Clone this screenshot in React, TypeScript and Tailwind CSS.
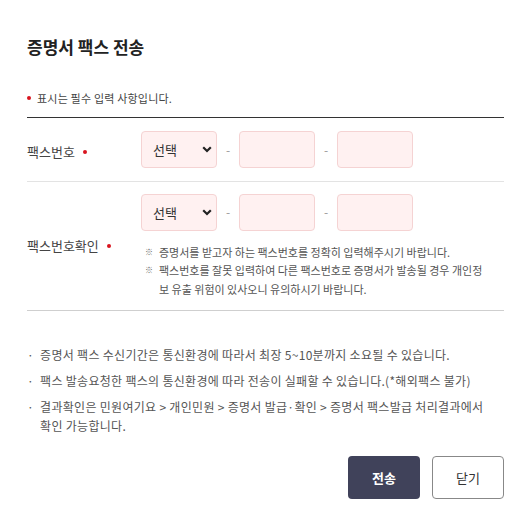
import React from "react";

const font = { fontFamily: '"Noto Sans CJK KR", "Noto Sans", sans-serif' };

function PhoneInputs() {
  return (
    <div className="flex items-center">
      <div className="relative w-[76px] h-[37px]">
        <select className="appearance-none w-full h-full rounded-[4px] border border-[#f5d3d3] bg-[#fff1f1] pl-[11px] text-[13px] text-[#333] outline-none">
          <option>선택</option>
        </select>
        <svg
          className="absolute right-[5px] top-[15px] pointer-events-none"
          width="10"
          height="7"
          viewBox="0 0 10 7"
        >
          <path d="M1.2 1.2 L5 5 L8.8 1.2" fill="none" stroke="#222" strokeWidth="2.2" />
        </svg>
      </div>
      <span className="w-[22px] text-center text-[12px] text-[#999]">-</span>
      <input className="w-[76px] h-[37px] rounded-[4px] border border-[#f5d3d3] bg-[#fff1f1] outline-none" />
      <span className="w-[22px] text-center text-[12px] text-[#999]">-</span>
      <input className="w-[76px] h-[37px] rounded-[4px] border border-[#f5d3d3] bg-[#fff1f1] outline-none" />
    </div>
  );
}

function Dot() {
  return <span className="inline-block w-[4px] h-[4px] rounded-full bg-[#d9141e] align-middle" />;
}

export default function App() {
  return (
    <div className="w-[513px] h-[529px] bg-white text-[#333] overflow-hidden" style={font}>
      <div className="pl-[27px] pr-[9px] pt-[34px]">
        <h2 className="text-[17px] font-bold text-[#222] leading-[26px]">증명서 팩스 전송</h2>

        <p className="mt-[30px] flex items-center gap-[6px] text-[11px] text-[#444] leading-[16px] mb-[11px] tracking-[0.2px]">
          <Dot />
          표시는 필수 입력 사항입니다.
        </p>

        <div className="border-t border-[#333]">
          <div className="flex items-center h-[64px] border-b border-[#e3e3e3]">
            <div className="w-[114px] flex items-center gap-[8px] pt-[4px] text-[13px] text-[#444]">
              팩스번호 <Dot />
            </div>
            <PhoneInputs />
          </div>

          <div className="flex items-center h-[129px] border-b border-[#cfcfcf]">
            <div className="w-[114px] flex items-center gap-[8px] text-[13px] text-[#444]">
              팩스번호확인 <Dot />
            </div>
            <div className="flex flex-col">
              <PhoneInputs />
              <ul className="mt-[12px] pl-[4px] text-[11px] leading-[18.5px] text-[#555]">
                <li className="flex gap-[6px]">
                  <span className="text-[8px] text-[#666]">※</span>
                  <span>증명서를 받고자 하는 팩스번호를 정확히 입력해주시기 바랍니다.</span>
                </li>
                <li className="flex gap-[6px]">
                  <span className="text-[8px] text-[#666]">※</span>
                  <span className="w-[326px] break-all">
                    팩스번호를 잘못 입력하여 다른 팩스번호로 증명서가 발송될 경우 개인정보 유출 위험이 있사오니 유의하시기 바랍니다.
                  </span>
                </li>
              </ul>
            </div>
          </div>
        </div>

        <ul className="mt-[34px] flex flex-col gap-[7px] text-[12px] leading-[19px] text-[#555] tracking-[0.3px]">
          <li className="flex gap-[6px]">
            <span className="text-[#555]">·</span>
            <span>증명서 팩스 수신기간은 통신환경에 따라서 최장 5~10분까지 소요될 수 있습니다.</span>
          </li>
          <li className="flex gap-[6px]">
            <span className="text-[#555]">·</span>
            <span>팩스 발송요청한 팩스의 통신환경에 따라 전송이 실패할 수 있습니다.(*해외팩스 불가)</span>
          </li>
          <li className="flex gap-[6px]">
            <span className="text-[#555]">·</span>
            <span className="w-[450px] shrink-0 break-all">
              결과확인은 민원여기요 &gt; 개인민원 &gt; 증명서 발급·확인 &gt; 증명서 팩스발급 처리결과에서확인 가능합니다.
            </span>
          </li>
        </ul>

        <div className="mt-[21px] flex justify-end gap-[12px]">
          <button className="w-[72px] h-[43px] rounded-[4px] bg-[#40425a] text-white text-[13px] font-bold">
            전송
          </button>
          <button className="w-[72px] h-[43px] rounded-[4px] border border-[#888] bg-white text-[#333] text-[13px]">
            닫기
          </button>
        </div>
      </div>
    </div>
  );
}
